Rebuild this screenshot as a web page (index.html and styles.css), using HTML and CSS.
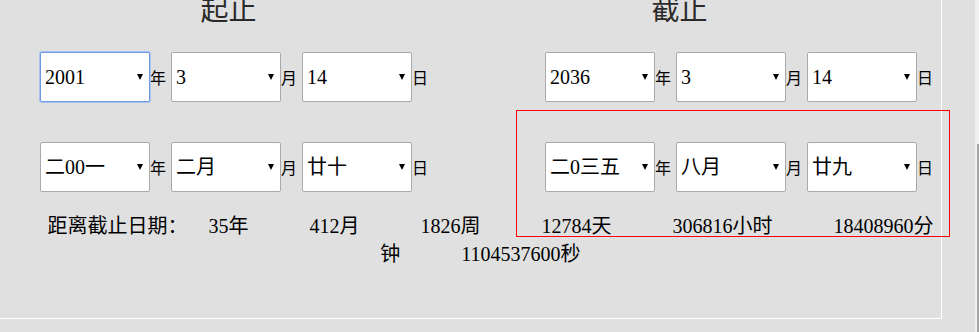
FILE: index.html
```html
<!DOCTYPE html>
<html lang="zh">
<head>
<meta charset="utf-8">
<title>日期计算</title>
<link rel="stylesheet" href="styles.css">
</head>
<body>
<div class="screen">
  <div class="page">
    <div class="panel">
      <div class="cols">
        <section class="col col-left">
          <h2 class="title">起止</h2>
          <div class="row">
            <span class="field"><select class="sel active"><option>2001</option></select></span><span class="unit">年</span>
            <span class="field"><select class="sel"><option>3</option></select></span><span class="unit">月</span>
            <span class="field"><select class="sel"><option>14</option></select></span><span class="unit">日</span>
          </div>
          <div class="row">
            <span class="field"><select class="sel"><option>二00一</option></select></span><span class="unit">年</span>
            <span class="field"><select class="sel"><option>二月</option></select></span><span class="unit">月</span>
            <span class="field"><select class="sel"><option>廿十</option></select></span><span class="unit">日</span>
          </div>
        </section>
        <section class="col col-right">
          <h2 class="title">截止</h2>
          <div class="row">
            <span class="field"><select class="sel"><option>2036</option></select></span><span class="unit">年</span>
            <span class="field"><select class="sel"><option>3</option></select></span><span class="unit">月</span>
            <span class="field"><select class="sel"><option>14</option></select></span><span class="unit">日</span>
          </div>
          <div class="row">
            <span class="field"><select class="sel"><option>二0三五</option></select></span><span class="unit">年</span>
            <span class="field"><select class="sel"><option>八月</option></select></span><span class="unit">月</span>
            <span class="field"><select class="sel"><option>廿九</option></select></span><span class="unit">日</span>
          </div>
        </section>
      </div>
      <p class="summary"><span class="lead">距离截止日期：</span><span class="first">35年</span><span class="item">412月</span><span class="item">1826周</span><span class="item">12784天</span><span class="item">306816小时</span><span class="item">18408960分钟</span><span class="item">1104537600秒</span></p>
    </div>
    <div class="highlight"></div>
  </div>
  <div class="scrollbar"><div class="thumb"></div></div>
</div>
</body>
</html>
```
FILE: styles.css
```css
html, body {
  margin: 0;
  padding: 0;
  height: 100%;
  overflow: hidden;
  background: #e0e0e0;
}

body {
  font-family: "Liberation Serif", "Noto Sans CJK SC", serif;
  color: #000;
}

.screen {
  display: flex;
  height: 332px;
}

.page {
  position: relative;
  flex: 1;
}

.panel {
  width: 941px;
  height: 318px;
  border-right: 1px solid #ffffff;
  border-bottom: 1px solid #ffffff;
}

.cols {
  display: grid;
  grid-template-columns: 457px 445px;
}

.title {
  margin: 0 0 28px;
  height: 24px;
  font-size: 28px;
  line-height: 22px;
  font-weight: normal;
  text-align: center;
  color: #2a2a2a;
}

.row {
  display: flex;
  align-items: center;
  height: 50px;
}

.row + .row {
  margin-top: 40px;
}

.col-left .row {
  padding-left: 40px;
}

.col-right .row {
  padding-left: 88px;
}

.field {
  position: relative;
  display: block;
  width: 110px;
  height: 50px;
}

.field::after {
  content: "";
  position: absolute;
  right: 7px;
  top: 22px;
  width: 0;
  height: 0;
  border-left: 3px solid transparent;
  border-right: 3px solid transparent;
  border-top: 6px solid #000;
  pointer-events: none;
}

.sel {
  -webkit-appearance: none;
  appearance: none;
  box-sizing: border-box;
  width: 110px;
  height: 50px;
  margin: 0;
  padding: 0 4px;
  border: 1px solid #a9a9a9;
  border-radius: 2px;
  background: #ffffff;
  font-family: "Liberation Serif", "Noto Sans CJK SC", serif;
  font-size: 20px;
  color: #000;
  outline: none;
}

.sel.active {
  border-color: #6f9ae3;
  box-shadow: 0 0 0 1px #a9c2ee;
}

.unit {
  width: 16px;
  margin-right: 5px;
  font-size: 16px;
  line-height: 18px;
  font-family: "Noto Sans CJK SC", sans-serif;
}

.summary {
  margin: 20px 0 0 24px;
  width: 913px;
  font-size: 20px;
  line-height: 28px;
  text-align: center;
}

.lead {
  margin-left: 20px;
}

.first {
  margin-left: 21px;
}

.item {
  margin-left: 61px;
}

.highlight {
  position: absolute;
  left: 516px;
  top: 110px;
  width: 432px;
  height: 125px;
  border: 1px solid #ff0000;
  pointer-events: none;
}

.scrollbar {
  width: 4px;
  background: #f0f0f0;
  display: flex;
  flex-direction: column;
}

.thumb {
  margin-top: 144px;
  margin-left: 2px;
  width: 2px;
  flex: 1;
  background: #a8a8a8;
}
```
